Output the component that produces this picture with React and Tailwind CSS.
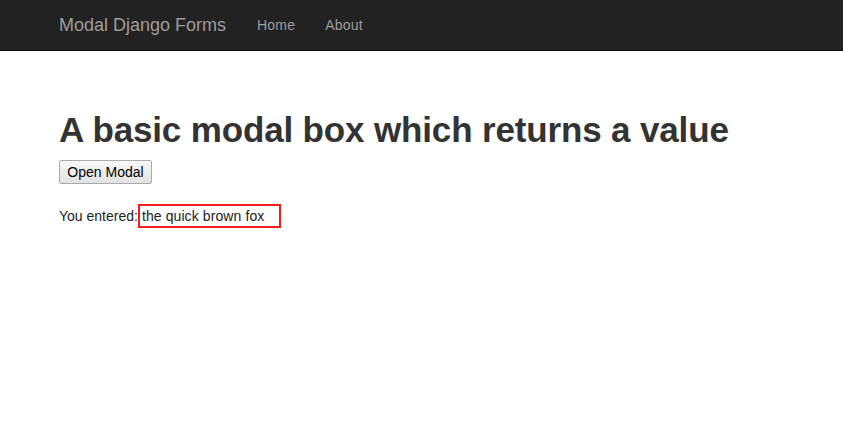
import React from 'react';

const App = () => {
    return (
        <div className="min-h-screen bg-white font-['Liberation_Sans',Arial,sans-serif] text-[#333]">
            {/* navbar */}
            <nav className="h-[51px] bg-[#222] border-b border-[#080808]">
                <div className="flex h-[50px] items-center pl-[59px]">
                    <span className="text-[18px] leading-[20px] text-[#9d9d9d]">Modal Django Forms</span>
                    <a className="ml-[31px] text-[14px] tracking-[0.2px] text-[#9d9d9d]">Home</a>
                    <a className="ml-[30px] text-[14px] tracking-[0.2px] text-[#9d9d9d]">About</a>
                </div>
            </nav>

            <div className="pl-[59px]">
                <h1 className="mt-[59px] text-[35px] leading-[40px] font-bold tracking-[-0.15px] text-[#333]">
                    A basic modal box which returns a value
                </h1>
                <button className="mt-[10px] h-[24px] w-[93px] text-[14px] leading-[20px] text-black bg-gradient-to-b from-[#f8f8f8] to-[#e2e2e2] border border-[#aaa] rounded-[2px]">
                    Open Modal
                </button>
                <div className="mt-[20px] flex items-center text-[14px] text-[#222]">
                    <span>You entered:</span>
                    <span className="h-[24px] w-[143px] border-2 border-[#f21d1d] pl-[2px] leading-[20px] tracking-[0.1px]">
                        the quick brown fox
                    </span>
                </div>
            </div>
        </div>
    );
};

export default App;
